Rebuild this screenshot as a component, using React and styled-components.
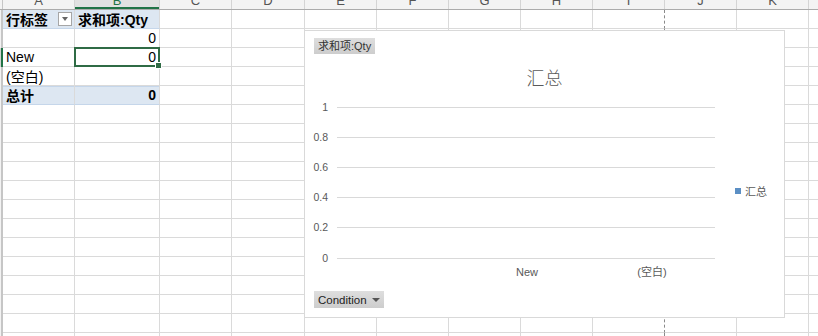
import React from "react";
import styled, { createGlobalStyle } from "styled-components";

const COLUMNS = [
  { key: "A", w: 72 },
  { key: "B", w: 85 },
  { key: "C", w: 72 },
  { key: "D", w: 73 },
  { key: "E", w: 72 },
  { key: "F", w: 72 },
  { key: "G", w: 72 },
  { key: "H", w: 72 },
  { key: "I", w: 72, pageBreak: true },
  { key: "J", w: 72 },
  { key: "K", w: 72 },
  { key: "L", w: 72 },
];

const ROW_COUNT = 18;
const SELECTED_ROW = 2;

// pivot table content, by row index: [A, B]
const PIVOT = [
  { a: "行标签", b: "求和项:Qty", head: true },
  { a: "", b: "0" },
  { a: "New", b: "0", selected: true },
  { a: "(空白)", b: "" },
  { a: "总计", b: "0", total: true },
];

const Y_TICKS = ["1", "0.8", "0.6", "0.4", "0.2", "0"];

function App() {
  return (
    <>
      <GlobalStyle />
      <Sheet>
        <HeaderRow>
          <Corner />
          {COLUMNS.map((c) => (
            <ColHeader key={c.key} $w={c.w} $active={c.key === "B"}>
              {c.key}
            </ColHeader>
          ))}
        </HeaderRow>

        {Array.from({ length: ROW_COUNT }).map((_, r) => {
          const p = PIVOT[r];
          return (
            <Row key={r}>
              <RowHead $active={r === SELECTED_ROW} />
              {COLUMNS.map((c, i) => {
                const inPivot = p && i < 2;
                const text = inPivot ? (i === 0 ? p.a : p.b) : "";
                return (
                  <Cell
                    key={c.key}
                    $w={c.w}
                    $pageBreak={c.pageBreak}
                    $band={inPivot && (p.head || p.total)}
                    $bold={inPivot && (p.head || p.total)}
                    $right={inPivot && i === 1 && !p.head}
                    $selected={inPivot && i === 1 && p.selected}
                    $totalTop={inPivot && p.total}
                  >
                    {text}
                    {inPivot && i === 0 && p.head && <FilterButton />}
                    {inPivot && i === 1 && p.selected && <FillHandle />}
                  </Cell>
                );
              })}
            </Row>
          );
        })}

        <Chart>
          <FieldButton>求和项:Qty</FieldButton>
          <ChartTitle>汇总</ChartTitle>
          <PlotRow>
            <Plot width="410" height="185" viewBox="0 0 410 185">
              {Y_TICKS.map((t, i) => {
                const y = i === 5 ? 158 : 7 + i * 30;
                return (
                  <g key={t}>
                    <line x1="23" x2="401" y1={y + 0.5} y2={y + 0.5} stroke="#d9d9d9" strokeWidth="1" />
                    <text
                      x="14"
                      y={y}
                      textAnchor="end"
                      dominantBaseline="central"
                      fontSize="10.5"
                      fill="#595959"
                      fontFamily="'Liberation Sans', sans-serif"
                    >
                      {t}
                    </text>
                  </g>
                );
              })}
              <text x="213" y="172" textAnchor="middle" dominantBaseline="central" fontSize="11" fill="#595959" fontFamily="'Liberation Sans', sans-serif">
                New
              </text>
              <text x="338" y="172" textAnchor="middle" dominantBaseline="central" fontSize="11" fill="#595959" fontFamily="'Liberation Sans', 'Noto Sans CJK SC', sans-serif">
                (空白)
              </text>
            </Plot>
            <Legend>
              <Swatch />
              汇总
            </Legend>
          </PlotRow>
          <ConditionButton>
            Condition
            <Caret />
          </ConditionButton>
        </Chart>
      </Sheet>
    </>
  );
}

export default App;

const GlobalStyle = createGlobalStyle`
  body {
    margin: 0;
    background: #fff;
    font-family: "Liberation Sans", "Noto Sans CJK SC", sans-serif;
    overflow: hidden;
  }
`;

const Sheet = styled.div`
  position: relative;
  width: 818px;
  height: 336px;
  overflow: hidden;
  background: #fff;
`;

const HeaderRow = styled.div`
  display: flex;
  height: 22px;
  margin-top: -12px;
  border-bottom: 1px solid #ababab;
  box-sizing: border-box;
  background: #f3f3f3;
`;

const Corner = styled.div`
  flex: 0 0 3px;
  border-right: 1px solid #c6c6c6;
  box-sizing: border-box;
`;

const ColHeader = styled.div`
  flex: 0 0 ${(p) => p.$w}px;
  box-sizing: border-box;
  display: flex;
  align-items: flex-end;
  justify-content: center;
  padding-bottom: 1px;
  font-size: 13px;
  line-height: 14px;
  color: ${(p) => (p.$active ? "#217346" : "#555")};
  background: ${(p) => (p.$active ? "#e1e1e1" : "transparent")};
  border-right: 1px solid #d4d4d4;
  box-shadow: ${(p) => (p.$active ? "inset 0 -2px 0 #217346" : "none")};
`;

const Row = styled.div`
  display: flex;
  height: 19px;
`;

const RowHead = styled.div`
  flex: 0 0 3px;
  box-sizing: border-box;
  background: ${(p) => (p.$active ? "#d2d2d2" : "#f3f3f3")};
  border-right: 2px solid ${(p) => (p.$active ? "#217346" : "#c6c6c6")};
`;

const Cell = styled.div`
  position: relative;
  flex: 0 0 ${(p) => p.$w}px;
  box-sizing: border-box;
  height: 19px;
  padding: 0 3px;
  display: flex;
  align-items: center;
  justify-content: ${(p) => (p.$right ? "flex-end" : "flex-start")};
  font-size: 14px;
  font-weight: ${(p) => (p.$bold ? 700 : 400)};
  color: #000;
  white-space: nowrap;
  background: ${(p) => (p.$band ? "#dde7f2" : "transparent")};
  border-right: 1px ${(p) => (p.$pageBreak ? "dashed #8a8a8a" : "solid #dadada")};
  border-bottom: 1px solid ${(p) => (p.$band ? "#c5d6ea" : "#dadada")};
  box-shadow: ${(p) => (p.$totalTop ? "inset 0 1px 0 #c5d6ea" : "none")};

  ${(p) =>
    p.$selected &&
    `
    &::after {
      content: "";
      position: absolute;
      left: -1px;
      top: -1px;
      right: -1px;
      bottom: -1px;
      border: 2px solid #2f6b45;
      pointer-events: none;
    }
  `}
`;

const FilterButton = styled.span`
  position: absolute;
  right: 2px;
  top: 2px;
  width: 14px;
  height: 14px;
  box-sizing: border-box;
  background: #fff;
  border: 1px solid #a6a6a6;

  &::after {
    content: "";
    position: absolute;
    left: 3px;
    top: 4px;
    border-left: 3.5px solid transparent;
    border-right: 3.5px solid transparent;
    border-top: 4px solid #666;
  }
`;

const FillHandle = styled.span`
  position: absolute;
  right: -3px;
  bottom: -3px;
  width: 5px;
  height: 5px;
  background: #2f6b45;
  border: 1px solid #fff;
  z-index: 1;
`;

const Chart = styled.div`
  position: absolute;
  left: 304px;
  top: 30px;
  width: 481px;
  height: 288px;
  box-sizing: border-box;
  background: #fff;
  border: 1px solid #d9d9d9;
  padding: 7px 9px 0;
  display: flex;
  flex-direction: column;
`;

const FieldButton = styled.div`
  align-self: flex-start;
  height: 16px;
  line-height: 16px;
  padding: 0 4px;
  font-size: 11px;
  color: #333;
  background: linear-gradient(#dedede, #cdcdcd);
`;

const ChartTitle = styled.div`
  margin-top: 11px;
  height: 24px;
  line-height: 24px;
  text-align: center;
  font-size: 18px;
  color: #595959;
  font-family: "Noto Sans CJK SC", sans-serif;
  font-weight: 300;
`;

const PlotRow = styled.div`
  display: flex;
  align-items: center;
  margin-top: 11px;
  height: 185px;
`;

const Plot = styled.svg`
  display: block;
  flex: 0 0 410px;
  overflow: visible;
`;

const Legend = styled.div`
  display: flex;
  align-items: center;
  gap: 4px;
  margin-left: 11px;
  margin-bottom: 4px;
  font-size: 11px;
  color: #595959;
`;

const Swatch = styled.span`
  width: 6px;
  height: 6px;
  background: #5b8fc4;
`;

const ConditionButton = styled.div`
  align-self: flex-start;
  margin-top: 6px;
  height: 17px;
  display: flex;
  align-items: center;
  gap: 5px;
  padding: 0 4px;
  font-size: 11.5px;
  color: #222;
  background: linear-gradient(#dedede, #cdcdcd);
`;

const Caret = styled.span`
  border-left: 4px solid transparent;
  border-right: 4px solid transparent;
  border-top: 4px solid #555;
`;
